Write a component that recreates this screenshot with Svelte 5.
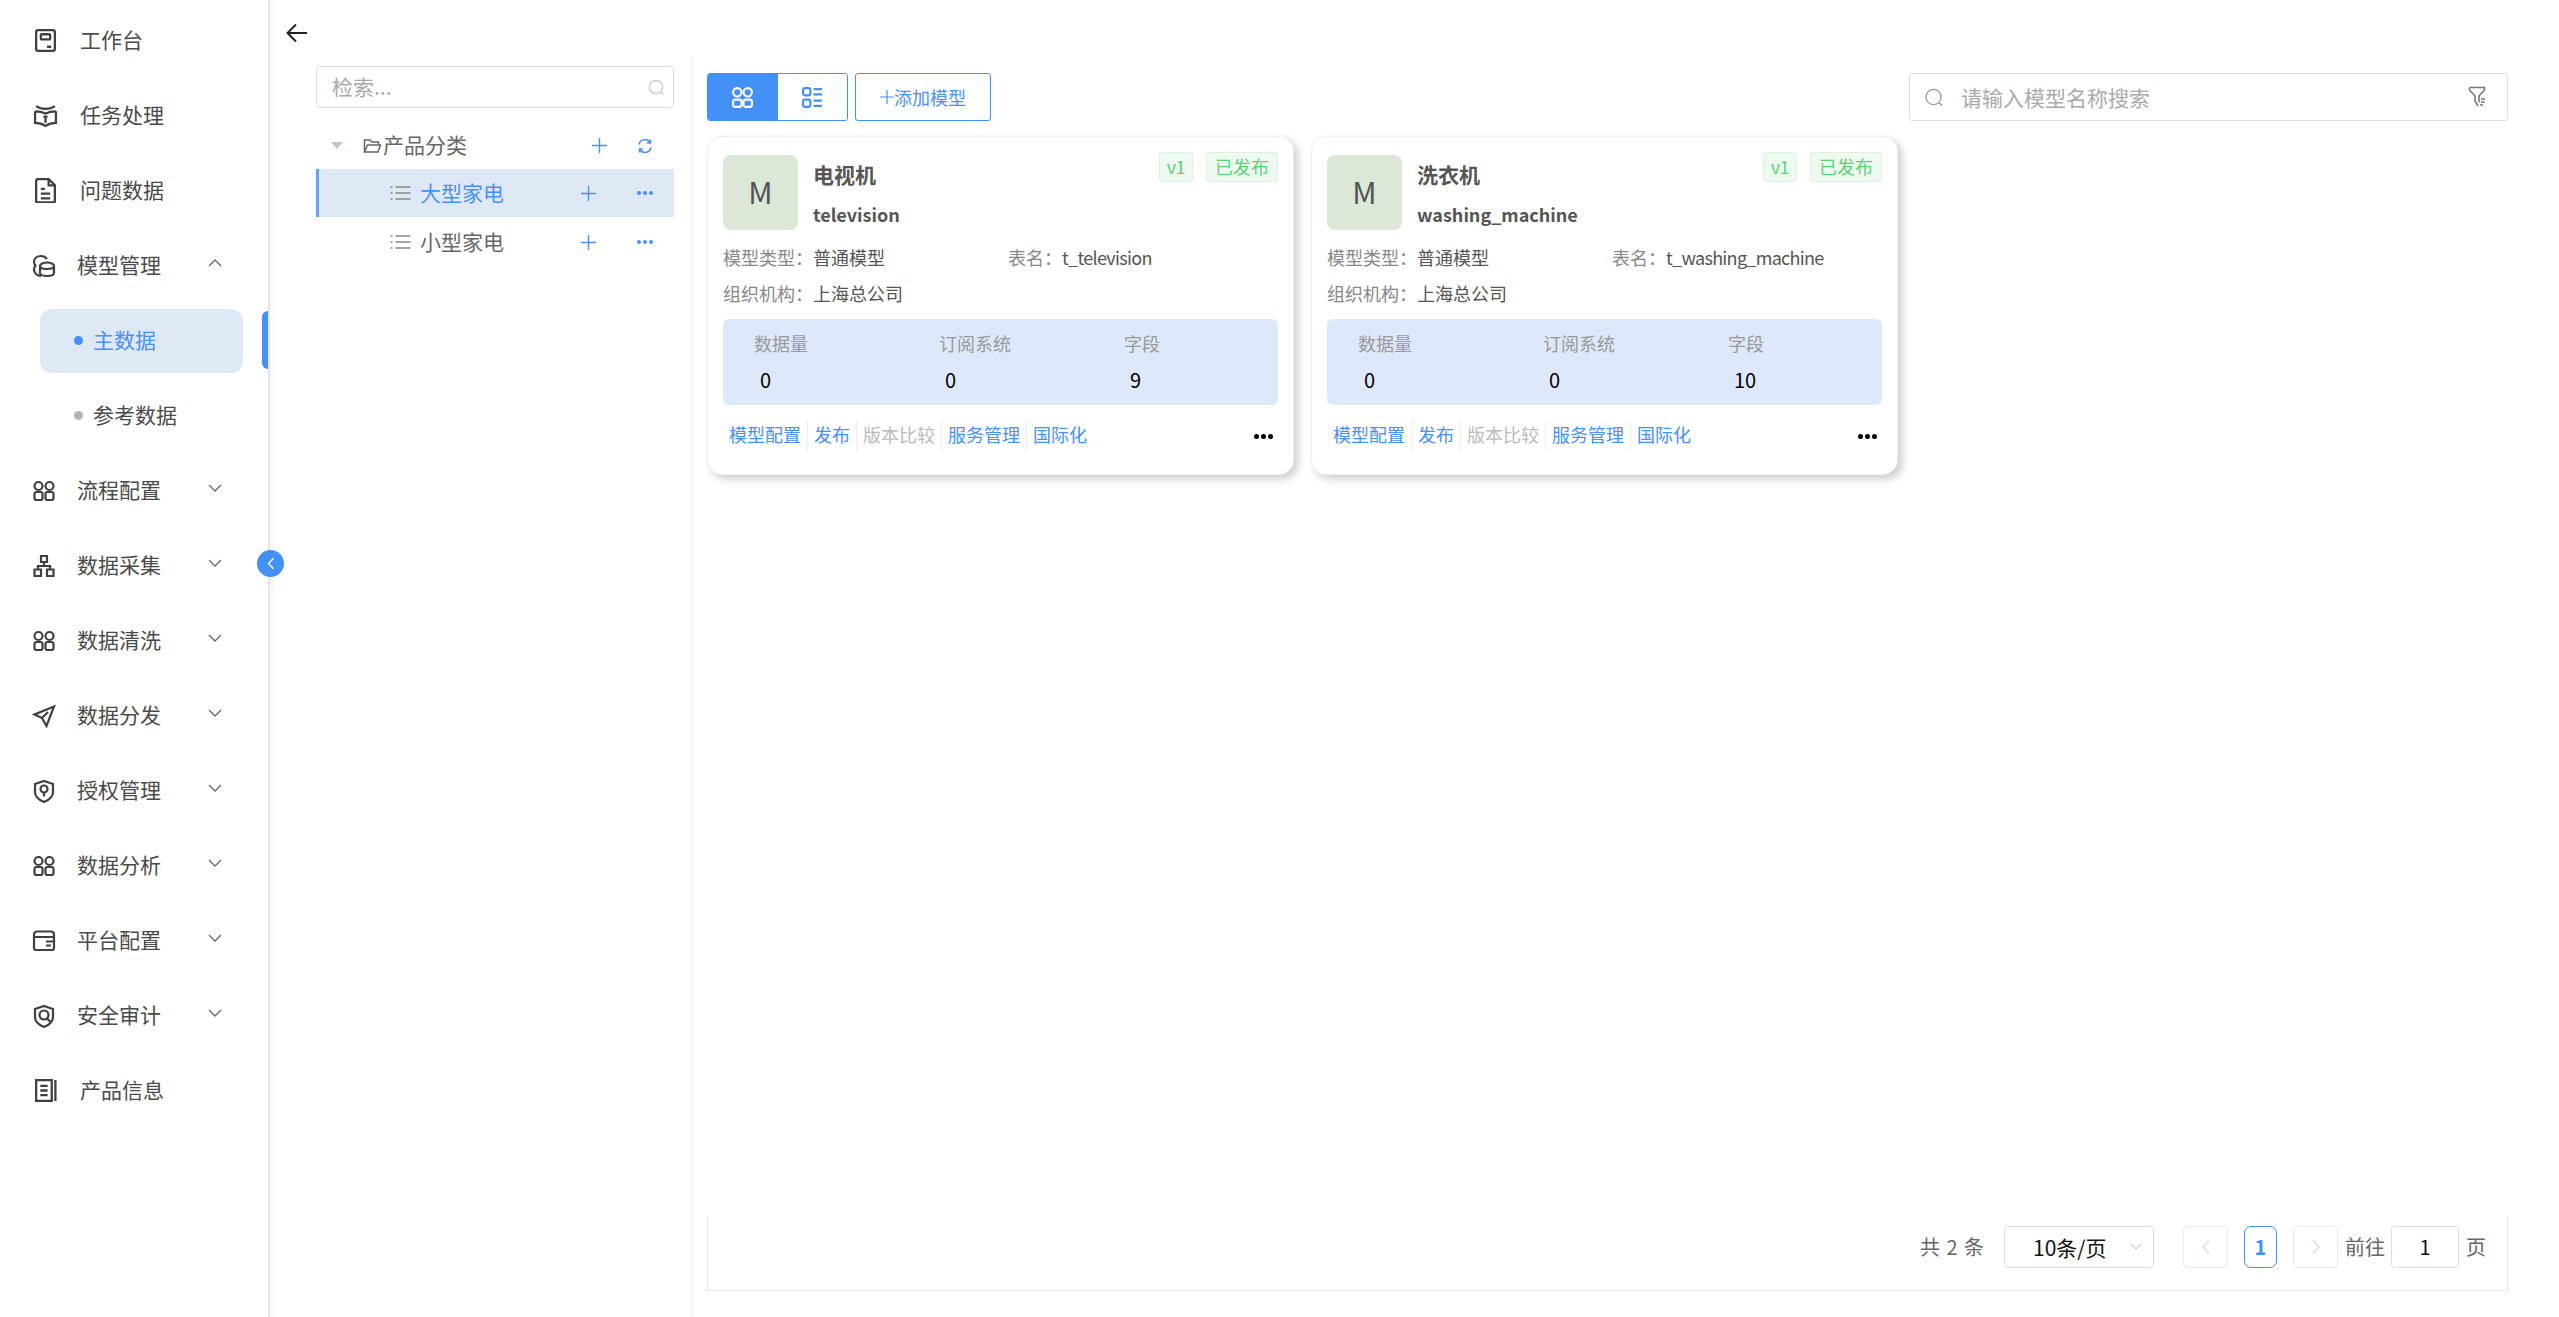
<script>
  const icons = {
    work: "M5 2h14a2 2 0 0 1 2 2v16a2 2 0 0 1-2 2H5a2 2 0 0 1-2-2V4a2 2 0 0 1 2-2z M8.5 6h7a1 1 0 0 1 1 1v3a1 1 0 0 1-1 1h-7a1 1 0 0 1-1-1V7a1 1 0 0 1 1-1z M13.5 18h4",
    book: "M3 3c5 3.5 13 3.500 18 0 M2 8v11c4 0 7 1 10 3 3-2 6-3 10-3V8 M2 8c4 0 7 .5 10 2 3-1.500 6-2 10-2 M12 13v6 M10 13h4",
    doc: "M5 1h10l6 6v15a1.500 1.500 0 0 1-1.500 1.500h-15A1.500 1.500 0 0 1 3 22V3a2 2 0 0 1 2-2z M15 1v6h6 M7.500 10.500h4 M7.500 15h9 M7.500 19.500h9",
    db: "M15 5c-1.500-2-3.500-3-6-3C5 2 2 4.500 2 8c0 1.500.6 2.600 1.500 3.500C2.600 12.600 2 14 2 15.500 2 19 5 22 9 22 M8 12c0-2 3.500-3.500 7-3.500s7 1.500 7 3.500v7c0 2-3.500 3-7 3s-7-1-7-3z M8 12c0 2 3.500 3 7 3s7-1 7-3",
    grid: "M2.500 7a4 4 0 1 0 8 0a4 4 0 1 0-8 0z M13.500 7a4 4 0 1 0 8 0a4 4 0 1 0-8 0z M4.500 13h4a2 2 0 0 1 2 2v4a2 2 0 0 1-2 2h-4a2 2 0 0 1-2-2v-4a2 2 0 0 1 2-2z M15.500 13h4a2 2 0 0 1 2 2v4a2 2 0 0 1-2 2h-4a2 2 0 0 1-2-2v-4a2 2 0 0 1 2-2z",
    org: "M9 2h6v6H9z M2.500 15.500h6.500V22H2.500z M15 15.500h6.500V22H15z M12 8v4 M6 15.500V12h12v3.500",
    send: "M22 2.500 2.500 10.500l7.500 3.500 4.500 8z M10 14l6-6",
    key: "M12 2l9 3v8c0 5-4 8-9 10-5-2-9-5-9-10V5z M8.500 10a3.500 3.500 0 1 0 7 0a3.500 3.500 0 1 0-7 0z M12 13.500v4",
    wallet: "M5 2.500h14a3 3 0 0 1 3 3V19a2 2 0 0 1-2 2H4a2 2 0 0 1-2-2V5.500a3 3 0 0 1 3-3z M2 8h20 M14 12.500h8 M14 16.500h5",
    audit: "M12 2l9 3v8c0 5-4 8-9 10-5-2-9-5-9-10V5z M7.500 11a4.500 4.500 0 1 0 9 0a4.500 4.500 0 1 0-9 0z M15 14.500l3.500 3.500",
    info: "M3 2h15v20H3z M7 7.500h7 M7 12h7 M7 16.500h7 M21.500 2v20",
  };

  const menu = [
    { name: "工作台", icon: "work" },
    { name: "任务处理", icon: "book" },
    { name: "问题数据", icon: "doc" },
    { name: "模型管理", icon: "db", arrow: "up", children: ["主数据", "参考数据"] },
    { name: "流程配置", icon: "grid", arrow: "down" },
    { name: "数据采集", icon: "org", arrow: "down" },
    { name: "数据清洗", icon: "grid", arrow: "down" },
    { name: "数据分发", icon: "send", arrow: "down" },
    { name: "授权管理", icon: "key", arrow: "down" },
    { name: "数据分析", icon: "grid", arrow: "down" },
    { name: "平台配置", icon: "wallet", arrow: "down" },
    { name: "安全审计", icon: "audit", arrow: "down" },
    { name: "产品信息", icon: "info" },
  ];

  const models = [
    { name: "电视机", code: "television", table: "t_television", fields: 9 },
    { name: "洗衣机", code: "washing_machine", table: "t_washing_machine", fields: 10 },
  ];

  const actions = ["模型配置", "发布", "版本比较", "服务管理", "国际化"];
</script>

<div class="app">
  <aside class="sidebar">
    <nav>
      {#each menu as item}
        <div class="menu-item" class:has-arrow={item.arrow}>
          <svg class="menu-icon" viewBox="0 0 24 24"><path d={icons[item.icon]} /></svg>
          <span class="menu-name">{item.name}</span>
          {#if item.arrow}
            <svg class="chevron" viewBox="0 0 14 8">
              <path d={item.arrow === "up" ? "M1 7l6-6 6 6" : "M1 1l6 6 6-6"} />
            </svg>
          {/if}
        </div>
        {#if item.children}
          {#each item.children as child, i}
            <div class="sub-row">
              <div class="sub-item" class:active={i === 0}>
                <span class="dot"></span><span class="sub-name">{child}</span>
              </div>
            </div>
          {/each}
        {/if}
      {/each}
    </nav>
    <span class="active-bar"></span>
    <button class="collapse" aria-label="收起">
      <svg viewBox="0 0 10 16"><path d="M8 1.500 2 8l6 6.500" /></svg>
    </button>
  </aside>

  <main class="main">
    <header class="back">
      <svg viewBox="0 0 22 20"><path d="M21 10H2 M10 1.500 1.500 10l8.500 8.500" /></svg>
    </header>

    <div class="body">
      <section class="tree">
        <div class="tree-search">
          <span class="nudge">检索...</span>
          <svg viewBox="0 0 18 18"><path d="M1.500 8.500a7 7 0 1 0 14 0a7 7 0 1 0-14 0z M13.500 13.500l3 3" /></svg>
        </div>
        <div class="tree-root">
          <span class="caret"></span>
          <svg class="folder" viewBox="0 0 18 16"><path d="M1 14V2h5.500l2 2H15v3 M1 14h13.500L17 7H4z" /></svg>
          <span class="tree-title nudge">产品分类</span>
          <svg class="plus root-plus" viewBox="0 0 15 15"><path d="M7.500 0v15 M0 7.500h15" /></svg>
          <svg class="refresh" viewBox="0 0 16 16">
            <path d="M2 6.500A6 6 0 0 1 13 4.500 M14 9.500A6 6 0 0 1 3 11.500 M13.500 1.500v3.500H10 M2.500 14.500V11H6" />
          </svg>
        </div>
        {#each ["大型家电", "小型家电"] as node, i}
          <div class="tree-node" class:selected={i === 0}>
            <svg class="list" viewBox="0 0 20 16">
              <path d="M0 2h2 M5 2h15 M0 8h2 M5 8h15 M0 14h2 M5 14h15" />
            </svg>
            <span class="node-name nudge">{node}</span>
            <svg class="plus" viewBox="0 0 15 15"><path d="M7.500 0v15 M0 7.500h15" /></svg>
            <span class="node-more"><i></i><i></i><i></i></span>
          </div>
        {/each}
      </section>

      <section class="content">
        <div class="toolbar">
          <div class="view-toggle">
            <button class="view on" aria-label="卡片">
              <svg viewBox="0 0 20 22">
                <path d="M1 6a4 4 0 1 0 8 0a4 4 0 1 0-8 0z M11 6a4 4 0 1 0 8 0a4 4 0 1 0-8 0z M3 13h4a2 2 0 0 1 2 2v3a2 2 0 0 1-2 2H3a2 2 0 0 1-2-2v-3a2 2 0 0 1 2-2z M13 13h4a2 2 0 0 1 2 2v3a2 2 0 0 1-2 2h-4a2 2 0 0 1-2-2v-3a2 2 0 0 1 2-2z" />
              </svg>
            </button>
            <button class="view" aria-label="列表">
              <svg viewBox="0 0 20 22">
                <path d="M3 2h3a2 2 0 0 1 2 2v3a2 2 0 0 1-2 2H3a2 2 0 0 1-2-2V4a2 2 0 0 1 2-2z M3 13h3a2 2 0 0 1 2 2v3a2 2 0 0 1-2 2H3a2 2 0 0 1-2-2v-3a2 2 0 0 1 2-2z M11 3h8 M11 8h8 M11 14h8 M11 19h8" />
              </svg>
            </button>
          </div>
          <button class="add-btn">
            <svg viewBox="0 0 14 14"><path d="M7 0v14 M0 7h14" /></svg>添加模型
          </button>
          <div class="model-search">
            <svg class="search-icon" viewBox="0 0 20 20"><path d="M1 9.500a8 8 0 1 0 16 0a8 8 0 1 0-16 0z M14.500 15.500l3.500 3" /></svg>
            <span class="placeholder">请输入模型名称搜索</span>
            <svg class="filter-icon" viewBox="0 0 18 22">
              <path d="M1.500 1.500h15v2.500l-5.500 6v6.500 M1.500 1.500v2.500l5.500 6v5l3 5 M13 13h4 M13 16h3.500 M12 19h3" />
            </svg>
          </div>
        </div>

        <div class="cards">
          {#each models as model}
            <article class="card">
              <div class="card-head">
                <div class="avatar"><span>M</span></div>
                <div class="names">
                  <div class="cn">{model.name}</div>
                  <div class="en">{model.code}</div>
                </div>
                <div class="tags">
                  <span class="tag">v1</span>
                  <span class="tag">已发布</span>
                </div>
              </div>
              <div class="info">
                <div class="field first"><span class="label">模型类型：</span><span>普通模型</span></div>
                <div class="field"><span class="label short">表名：</span><span class="table-name">{model.table}</span></div>
              </div>
              <div class="info">
                <div class="field first"><span class="label">组织机构：</span><span>上海总公司</span></div>
              </div>
              <div class="stats">
                <div class="stat"><div class="stat-label">数据量</div><div class="stat-value">0</div></div>
                <div class="stat"><div class="stat-label">订阅系统</div><div class="stat-value">0</div></div>
                <div class="stat"><div class="stat-label">字段</div><div class="stat-value">{model.fields}</div></div>
              </div>
              <div class="actions">
                {#each actions as action}
                  <span class="action" class:disabled={action === "版本比较"}>{action}</span>
                {/each}
                <span class="more"><i></i><i></i><i></i></span>
              </div>
            </article>
          {/each}
        </div>

        <footer class="pager">
          <span class="total">共 2 条</span>
          <div class="size">
            <span>10条/页</span>
            <svg viewBox="0 0 14 8"><path d="M1 1l6 6 6-6" /></svg>
          </div>
          <button class="page-btn" aria-label="上一页">
            <svg viewBox="0 0 10 16"><path d="M8 1.500 2 8l6 6.500" /></svg>
          </button>
          <button class="page-num">1</button>
          <button class="page-btn" aria-label="下一页">
            <svg viewBox="0 0 10 16"><path d="M2 1.500 8 8l-6 6.500" /></svg>
          </button>
          <span class="goto">前往</span>
          <div class="goto-input">1</div>
          <span class="goto-unit">页</span>
        </footer>
      </section>
    </div>
  </main>
</div>

<style>
  :global(body) {
    margin: 0;
    background: #fff;
  }

  .app {
    display: flex;
    width: 2559px;
    height: 1317px;
    overflow: hidden;
    font-family: "Noto Sans CJK SC", "Open Sans", sans-serif;
    font-size: 21px;
    color: #555;
  }

  svg {
    display: block;
    flex: none;
    fill: none;
  }

  button {
    font-family: inherit;
    padding: 0;
  }

  /* the CJK font sits a little lower than the reference's */
  .nudge,
  .menu-name,
  .sub-name {
    margin-bottom: 3px;
  }

  /* sidebar */
  .sidebar {
    position: relative;
    flex: none;
    width: 268px;
    height: 100%;
    box-sizing: content-box;
    border-right: 2px solid #e6e6e6;
    box-shadow: 3px 0 7px rgba(0, 0, 0, 0.04);
    padding-top: 3px;
    z-index: 1;
  }

  .menu-item {
    display: flex;
    align-items: center;
    height: 75px;
    padding-left: 33px;
    color: #4a4a4a;
  }

  .menu-icon {
    width: 25px;
    height: 25px;
    stroke: #404040;
    stroke-width: 2.2;
    margin-right: 22px;
  }

  .menu-item.has-arrow .menu-icon {
    width: 24px;
    height: 24px;
    margin-left: -1px;
    margin-right: 21px;
  }

  .menu-name {
    flex: 1;
  }

  .chevron {
    width: 14px;
    height: 8px;
    margin: 0 46px 6px 0;
    stroke: #666;
    stroke-width: 1.3;
  }

  .sub-row {
    display: flex;
    align-items: center;
    height: 75px;
  }

  .sub-item {
    display: flex;
    align-items: center;
    width: 203px;
    height: 64px;
    margin-left: 40px;
    border-radius: 12px;
    padding-left: 34px;
    box-sizing: border-box;
    color: #4a4a4a;
  }

  .sub-item.active {
    background: #dfe9f5;
    color: #4a90f5;
  }

  .dot {
    width: 9px;
    height: 9px;
    border-radius: 50%;
    background: #b3b3b3;
    margin-right: 10px;
  }

  .sub-item.active .dot {
    background: #4390f7;
  }

  .active-bar {
    position: absolute;
    left: 262px;
    top: 311px;
    width: 6px;
    height: 58px;
    background: #4390f7;
    border-radius: 6px 0 0 6px;
  }

  .collapse {
    position: absolute;
    left: 257px;
    top: 550px;
    width: 27px;
    height: 27px;
    border: 0;
    border-radius: 50%;
    background: #4390f7;
    display: flex;
    align-items: center;
    justify-content: center;
  }

  .collapse svg {
    width: 8px;
    height: 13px;
    stroke: #fff;
    stroke-width: 1.8;
  }

  /* main */
  .main {
    flex: 1;
    min-width: 0;
    display: flex;
    flex-direction: column;
  }

  .back {
    height: 58px;
    flex: none;
    padding: 23px 0 0 16px;
    box-sizing: border-box;
  }

  .back svg {
    width: 22px;
    height: 20px;
    stroke: #222;
    stroke-width: 2;
  }

  .body {
    flex: 1;
    display: flex;
    min-height: 0;
  }

  /* tree */
  .tree {
    flex: none;
    width: 422px;
    box-sizing: border-box;
    padding: 8px 17px 0 46px;
    border-right: 1px solid #eee;
  }

  .tree-search {
    display: flex;
    align-items: center;
    justify-content: space-between;
    height: 42px;
    box-sizing: border-box;
    border: 1px solid #ddd;
    border-radius: 4px;
    padding: 0 8px 0 15px;
    color: #aaa;
  }

  .tree-search svg {
    width: 17px;
    height: 17px;
    stroke: #ccc;
    stroke-width: 1.5;
  }

  .tree-root {
    display: flex;
    align-items: center;
    height: 47px;
    margin-top: 14px;
    padding-left: 15px;
    color: #666;
  }

  .caret {
    width: 0;
    height: 0;
    border-left: 6px solid transparent;
    border-right: 6px solid transparent;
    border-top: 7px solid #c0c4cc;
    margin-right: 20px;
  }

  .folder {
    width: 19px;
    height: 16px;
    stroke: #666;
    stroke-width: 1.5;
    margin-right: 1px;
  }

  .tree-title {
    width: 209px;
  }

  .plus {
    width: 15px;
    height: 15px;
    stroke: #4a90f5;
    stroke-width: 1.4;
  }

  .root-plus {
    margin-right: 30px;
  }

  .refresh {
    width: 16px;
    height: 16px;
    stroke: #4a90f5;
    stroke-width: 1.5;
  }

  .tree-node {
    display: flex;
    align-items: center;
    height: 48px;
    margin-bottom: 1px;
    padding-left: 74px;
    box-sizing: border-box;
    color: #666;
  }

  .tree-node.selected {
    background: #dfe9f5;
    color: #4a90f5;
    border-left: 3px solid #66a3ff;
    padding-left: 71px;
  }

  .list {
    width: 21px;
    height: 16px;
    stroke: #888;
    stroke-width: 1.6;
    margin-right: 9px;
  }

  .node-name {
    width: 161px;
  }

  .node-more {
    display: flex;
    gap: 2px;
    margin-left: 41px;
  }

  .node-more i {
    width: 4px;
    height: 4px;
    border-radius: 50%;
    background: #4a90f5;
  }

  /* content */
  .content {
    flex: 1;
    min-width: 0;
    display: flex;
    flex-direction: column;
    padding: 15px 51px 26px 15px;
    box-sizing: border-box;
  }

  .toolbar {
    display: flex;
    align-items: stretch;
    height: 48px;
    flex: none;
  }

  .view-toggle {
    display: flex;
    width: 141px;
    box-sizing: border-box;
    border: 1px solid #4390f7;
    border-radius: 3px;
    overflow: hidden;
  }

  .view {
    flex: 1;
    border: 0;
    background: #fff;
    display: flex;
    align-items: center;
    justify-content: center;
  }

  .view svg {
    width: 21px;
    height: 23px;
    stroke: #4390f7;
    stroke-width: 2;
  }

  .view.on {
    background: #4390f7;
  }

  .view.on svg {
    stroke: #fff;
  }

  .add-btn {
    display: flex;
    align-items: center;
    justify-content: center;
    width: 136px;
    margin-left: 7px;
    border: 1px solid #4390f7;
    border-radius: 3px;
    background: #fff;
    color: #4a90f5;
    font-size: 18px;
  }

  .add-btn svg {
    width: 14px;
    height: 14px;
    stroke: #4a90f5;
    stroke-width: 1.2;
  }

  .model-search {
    display: flex;
    align-items: center;
    width: 599px;
    margin-left: auto;
    box-sizing: border-box;
    border: 1px solid #ddd;
    border-radius: 3px;
    padding: 0 21px 0 15px;
    color: #aaa;
  }

  .search-icon {
    width: 19px;
    height: 19px;
    stroke: #999;
    stroke-width: 1.4;
    margin-right: 17px;
  }

  .placeholder {
    flex: 1;
  }

  .filter-icon {
    width: 18px;
    height: 22px;
    stroke: #777;
    stroke-width: 1.6;
  }

  .cards {
    flex: 1;
    display: flex;
    align-items: flex-start;
    gap: 17px;
    margin-top: 15px;
  }

  .card {
    width: 587px;
    height: 339px;
    box-sizing: border-box;
    border: 1px solid #eef0f6;
    border-radius: 15px;
    padding: 18px 15px 0;
    box-shadow: 4px 4px 8px rgba(0, 0, 0, 0.2);
    background: #fff;
    font-size: 18px;
  }

  .card-head {
    display: flex;
    height: 75px;
  }

  .avatar {
    width: 75px;
    height: 75px;
    border-radius: 8px;
    background: #dbe8d8;
    display: flex;
    align-items: center;
    justify-content: center;
    font-size: 30px;
    color: #555;
    margin-right: 15px;
    flex: none;
  }

  .avatar span {
    margin-bottom: 3px;
  }

  .cn {
    font-size: 21px;
    font-weight: 700;
    line-height: 39px;
    color: #555;
  }

  .en {
    font-size: 18px;
    font-weight: 700;
    line-height: 40px;
    color: #555;
  }

  .tags {
    display: flex;
    gap: 13px;
    margin: -3px 0 0 auto;
    align-self: flex-start;
  }

  .tag {
    height: 30px;
    line-height: 26px;
    box-sizing: border-box;
    padding: 0 8px;
    border: 1px solid #dcf3e1;
    border-radius: 3px;
    background: #eefaf0;
    color: #5fd07a;
  }

  .tag:first-child {
    padding: 0 7px;
    letter-spacing: -0.5px;
  }

  .info {
    display: flex;
    height: 35px;
    align-items: center;
    color: #555;
  }

  .card-head + .info {
    margin-top: 9px;
    height: 36px;
  }

  .field {
    display: flex;
  }

  .field.first {
    width: 285px;
  }

  .label {
    width: 90px;
    color: #888;
  }

  .label.short {
    width: 54px;
  }

  .table-name {
    letter-spacing: -0.7px;
  }

  .stats {
    display: grid;
    grid-template-columns: repeat(3, 185px);
    height: 86px;
    margin-top: 9px;
    padding-left: 31px;
    box-sizing: border-box;
    background: #dde8fa;
    border-radius: 6px;
  }

  .stat-label {
    color: #999;
    margin-top: 11px;
    line-height: 26px;
  }

  .stat-value {
    color: #000;
    padding-left: 6px;
    font-size: 20px;
    line-height: 30px;
    margin-top: 9px;
  }

  .actions {
    display: flex;
    align-items: center;
    height: 30px;
    margin-top: 16px;
    padding-right: 5px;
  }

  .action {
    padding: 0 6px 2px;
    height: 30px;
    line-height: 26px;
    box-sizing: border-box;
    color: #4a90f5;
    border-right: 1px solid #eee;
  }

  .action:nth-child(5) {
    border-right: 0;
  }

  .action.disabled {
    color: #bbb;
  }

  .more {
    display: flex;
    gap: 2px;
    margin-left: auto;
  }

  .more i {
    width: 5px;
    height: 5px;
    border-radius: 50%;
    background: #000;
  }

  /* pager */
  .pager {
    flex: none;
    display: flex;
    align-items: center;
    height: 75px;
    box-sizing: border-box;
    border: 1px solid #e4e4e4;
    border-top: 0;
    padding: 0 21px 13px 0;
    justify-content: flex-end;
    font-size: 20px;
    color: #666;
  }

  .total {
    margin-right: 20px;
    word-spacing: 2px;
  }

  .size {
    display: flex;
    align-items: center;
    width: 150px;
    height: 42px;
    box-sizing: border-box;
    border: 1px solid #ddd;
    border-radius: 4px;
    padding: 0 11px 0 28px;
    color: #111;
    font-size: 21px;
    margin-right: 29px;
  }

  .size span {
    flex: 1;
  }

  .size svg {
    width: 12px;
    height: 7px;
    stroke: #c0c4cc;
    stroke-width: 1.3;
  }

  .page-btn {
    width: 45px;
    height: 42px;
    border: 1px solid #e8eaef;
    border-radius: 4px;
    background: #fff;
    display: flex;
    align-items: center;
    justify-content: center;
  }

  .page-btn svg {
    width: 10px;
    height: 16px;
    stroke: #e1e5ee;
    stroke-width: 2;
  }

  .page-num {
    width: 33px;
    height: 42px;
    margin: 0 16px;
    border: 1px solid #4390f7;
    border-radius: 7px;
    background: #fff;
    color: #4390f7;
    font-size: 20px;
    font-weight: 700;
  }

  .goto {
    margin-left: 7px;
  }

  .goto-input {
    width: 68px;
    height: 42px;
    line-height: 40px;
    margin: 0 7px 0 6px;
    box-sizing: border-box;
    border: 1px solid #ddd;
    border-radius: 4px;
    text-align: center;
    color: #111;
  }
</style>
